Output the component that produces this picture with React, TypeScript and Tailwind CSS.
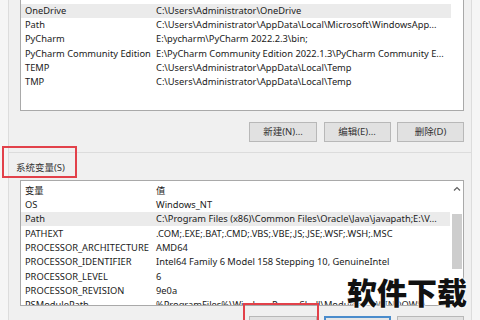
import React from "react";

type Row = [string, string];

const userRows: Row[] = [
  ["OneDrive", "C:\\Users\\Administrator\\OneDrive"],
  ["Path", "C:\\Users\\Administrator\\AppData\\Local\\Microsoft\\WindowsApp..."],
  ["PyCharm", "E:\\pycharm\\PyCharm 2022.2.3\\bin;"],
  ["PyCharm Community Edition", "E:\\PyCharm Community Edition 2022.1.3\\PyCharm Community E..."],
  ["TEMP", "C:\\Users\\Administrator\\AppData\\Local\\Temp"],
  ["TMP", "C:\\Users\\Administrator\\AppData\\Local\\Temp"],
];

const sysRows: Row[] = [
  ["OS", "Windows_NT"],
  ["Path", "C:\\Program Files (x86)\\Common Files\\Oracle\\Java\\javapath;E:\\V..."],
  ["PATHEXT", ".COM;.EXE;.BAT;.CMD;.VBS;.VBE;.JS;.JSE;.WSF;.WSH;.MSC"],
  ["PROCESSOR_ARCHITECTURE", "AMD64"],
  ["PROCESSOR_IDENTIFIER", "Intel64 Family 6 Model 158 Stepping 10, GenuineIntel"],
  ["PROCESSOR_LEVEL", "6"],
  ["PROCESSOR_REVISION", "9e0a"],
  ["PSModulePath", "%ProgramFiles%\\WindowsPowerShell\\Modules;C:\\WINDOWS\\..."],
];

function ListRow({ row, selected }: { row: Row; selected?: boolean }) {
  return (
    <div
      className={
        "flex h-[14.33px] shrink-0 items-center whitespace-nowrap " +
        (selected ? "bg-[#ebebeb]" : "")
      }
    >
      <div className="w-[130px] shrink-0 overflow-hidden pl-[4px]">{row[0]}</div>
      <div className="min-w-0 flex-1 overflow-hidden pl-[5px]">{row[1]}</div>
    </div>
  );
}

function Btn({ label, primary }: { label: string; primary?: boolean }) {
  return (
    <div
      className={
        "flex h-[20px] items-center justify-center text-[9.5px] text-[#333] " +
        (primary
          ? "border-2 border-[#4a8ccc] bg-[#e6e6e6]"
          : "border border-[#b8b8b8] bg-[#e1e1e1]")
      }
    >
      {label}
    </div>
  );
}

export default function App() {
  return (
    <div className="relative h-[320px] w-[480px] overflow-hidden bg-[#f5f5f5] font-[Noto_Sans,Noto_Sans_CJK_SC,sans-serif] text-[9.3px] text-[#1a1a1a]">
      <div className="flex h-full flex-col">
        {/* upper panel */}
        <div className="mx-[8px] flex h-[153px] shrink-0 flex-col border-x border-b border-[#dcdcdc] bg-[#f0f0f0] pl-[11px] pr-[7px]">
          <div className="-mt-[1px] flex h-[112px] shrink-0 border border-[#a9a9a9] bg-white">
            <div className="flex min-w-0 flex-1 flex-col pt-[3.5px]">
              {userRows.map((r, i) => (
                <ListRow key={i} row={r} selected={i === 0} />
              ))}
            </div>
            <div className="w-[12px] shrink-0" />
          </div>
          <div className="mt-[11px] flex justify-end gap-[6.5px]">
            <div className="w-[68px]">
              <Btn label="新建(N)..." />
            </div>
            <div className="w-[67px]">
              <Btn label="编辑(E)..." />
            </div>
            <div className="w-[67px]">
              <Btn label="删除(D)" />
            </div>
          </div>
        </div>

        {/* lower panel */}
        <div className="mx-[8px] flex flex-1 flex-col border-x border-[#dcdcdc] bg-[#f0f0f0] pl-[11px] pr-[7px]">
          <div className="flex h-[27px] shrink-0 flex-col pt-[10px]">
            <span className="-ml-[4px] text-[9.5px] leading-[10px] text-[#333]">系统变量(S)</span>
          </div>
          <div className="flex h-[126px] shrink-0 overflow-hidden border border-[#a9a9a9] bg-white">
            <div className="flex min-w-0 flex-1 flex-col pt-[2.5px]">
              <ListRow row={["变量", "值"]} />
              {sysRows.map((r, i) => (
                <ListRow key={i} row={r} selected={i === 1} />
              ))}
            </div>
            <div className="flex w-[13px] shrink-0 flex-col items-center bg-white">
              <svg width="8" height="6" viewBox="0 0 8 6" className="mt-[5px]">
                <path d="M1 4.5 L4 1.5 L7 4.5" fill="none" stroke="#606060" strokeWidth="1.2" />
              </svg>
              <div className="mt-[22px] h-[55px] w-[10px] bg-[#cdcdcd]" />
            </div>
          </div>
          <div className="mt-[10px] flex justify-end gap-[6.5px]">
            <div className="w-[68px]">
              <Btn label="" />
            </div>
            <div className="w-[67px]">
              <Btn label="" primary />
            </div>
            <div className="w-[67px]">
              <Btn label="" />
            </div>
          </div>
        </div>
      </div>

      {/* annotations */}
      <div className="absolute left-[2px] top-[146px] h-[32px] w-[75px] border-2 border-[#e2414a]" />
      <div className="absolute left-[243px] top-[303px] h-[30px] w-[76px] border-2 border-[#e2414a]" />
      <div className="absolute left-[347px] top-[276px] font-[Noto_Sans_CJK_SC,sans-serif] text-[30px] font-black leading-[30px] text-[#111] [text-shadow:0_0_2px_#fff,0_0_2px_#fff,0_0_3px_#fff]">
        软件下载
      </div>
    </div>
  );
}
